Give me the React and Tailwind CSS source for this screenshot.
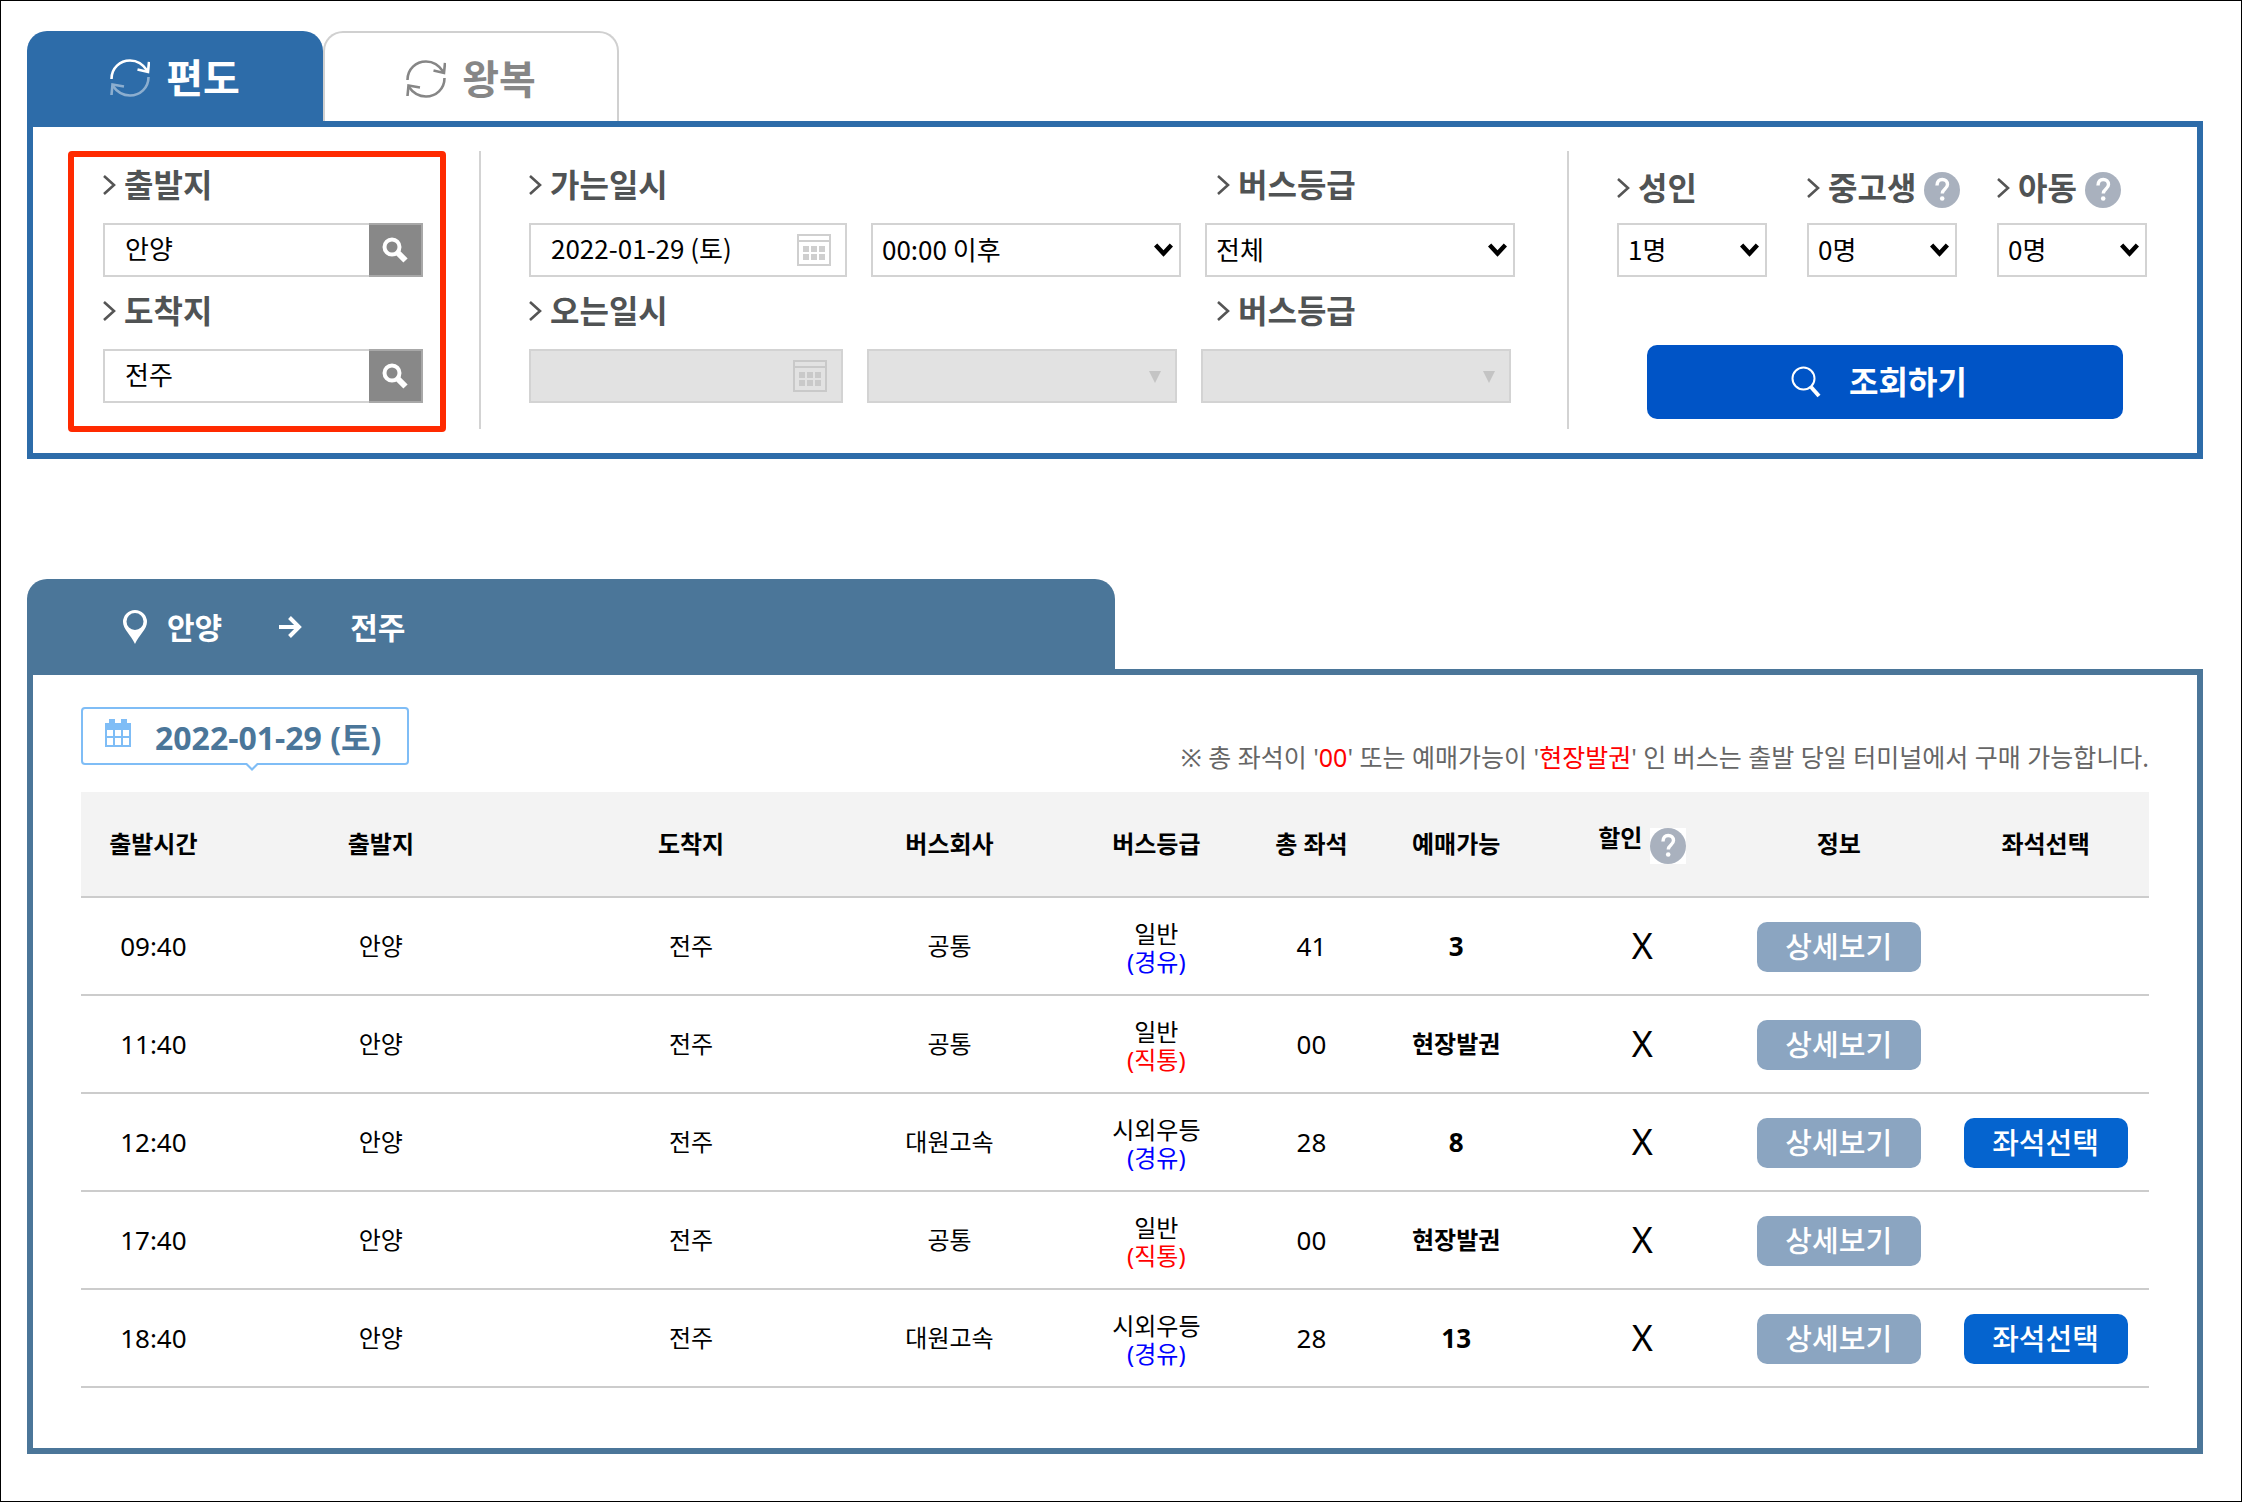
import { useState } from 'react'

const BUSES = [
  { time: '09:40', company: '공통', grade: '일반', route: '(경유)', seats: '41', left: '3', bookable: false },
  { time: '11:40', company: '공통', grade: '일반', route: '(직통)', seats: '00', left: '현장발권', bookable: false },
  { time: '12:40', company: '대원고속', grade: '시외우등', route: '(경유)', seats: '28', left: '8', bookable: true },
  { time: '17:40', company: '공통', grade: '일반', route: '(직통)', seats: '00', left: '현장발권', bookable: false },
  { time: '18:40', company: '대원고속', grade: '시외우등', route: '(경유)', seats: '28', left: '13', bookable: true },
]

function RoundTripIcon({ fadeReturn }) {
  return (
    <svg className="w-10 h-10 shrink-0" viewBox="0 0 40 40" fill="none" stroke="currentColor" strokeWidth="2.6">
      <path d="M1.5 21C1.5 10 10 2.5 20 2.5c7 0 13 3.500 17.500 10.500" />
      <path d="M27.500 11.500 38 14l1-10" />
      <g opacity={fadeReturn ? 0.45 : 1}>
        <path d="M38.500 19C38.500 30 30 37.500 20 37.500 13 37.500 7 34 2.500 27.500" />
        <path d="M14 28.500 2.500 26.500 1.500 37" />
      </g>
    </svg>
  )
}

function HelpIcon() {
  return (
    <svg className="w-9 h-9 shrink-0" viewBox="0 0 36 36" fill="none">
      <circle cx="18" cy="18" r="18" fill="#a9b1be" />
      <path d="M13 13.500c0-4 2.200-6 5.200-6s5.300 1.900 5.300 5.100c0 4.400-5.200 4.400-5.200 8.900" stroke="#fff" strokeWidth="3.400" />
      <circle cx="18.200" cy="26.500" r="2.300" fill="#fff" />
    </svg>
  )
}

function CalendarIcon({ color }) {
  return (
    <svg className="w-[34px] h-8 shrink-0" viewBox="0 0 34 32" fill="none" stroke={color} strokeWidth="2">
      <path d="M1 1h32v30H1zM1 7h32" />
      <g fill={color} stroke="none">
        <path d="M6 12h6v6H6zM14 12h6v6h-6zM22 12h6v6h-6zM6 20h6v6H6zM14 20h6v6h-6zM22 20h6v6h-6z" />
      </g>
    </svg>
  )
}

function FieldLabel({ htmlFor, children }) {
  return (
    <label htmlFor={htmlFor} className="flex items-center gap-2 h-11 mb-1 text-[32px] leading-[44px] font-bold text-[#505354] whitespace-nowrap">
      <svg className="w-[13px] h-5 shrink-0" viewBox="0 0 13 20" fill="none" stroke="#555" strokeWidth="2.6">
        <path d="M1 1l10 9L1 19" />
      </svg>
      {children}
    </label>
  )
}

function PlaceField({ id, label, value, onChange }) {
  return (
    <>
      <FieldLabel htmlFor={id}>{label}</FieldLabel>
      <div className="flex h-[54px] border-2 border-[#d3d3d3]">
        <input
          id={id}
          type="text"
          value={value}
          onChange={(e) => onChange(e.target.value)}
          className="flex-1 min-w-0 pl-5 pb-1.5 text-[26px] font-['Noto_Sans_CJK_KR',sans-serif] outline-none"
        />
        <button className="flex items-center justify-center w-[54px] -my-0.5 -mr-0.5 border-2 border-l-0 border-[#a8a8a8] bg-[#888]" title={`${label} 검색`}>
          <svg className="w-[26px] h-[26px]" viewBox="0 0 26 26" fill="none" stroke="#fff">
            <circle cx="10" cy="10" r="7.500" strokeWidth="4" />
            <path d="M15 15l8.500 8.500" strokeWidth="6" />
          </svg>
        </button>
      </div>
    </>
  )
}

function Dropdown({ id, options }) {
  return (
    <div className="relative min-w-0">
      <select id={id} className="appearance-none block w-full h-[54px] pl-[9px] pr-9 pb-1 border-2 border-[#d3d3d3] bg-white text-[26px] font-['Noto_Sans_CJK_KR',sans-serif] text-black">
        {options.map((o) => <option key={o}>{o}</option>)}
      </select>
      <svg className="absolute right-2 top-5 w-[19px] h-[14px] pointer-events-none" viewBox="0 0 19 14" fill="none" stroke="#000" strokeWidth="4.500">
        <path d="M1.600 2l7.900 8.500L17.400 2" />
      </svg>
    </div>
  )
}

function DisabledDropdown({ id }) {
  return (
    <div className="relative min-w-0">
      <select id={id} disabled className="appearance-none block w-full h-[54px] border-2 border-[#d3d3d3] bg-[#e2e2e2] opacity-100" />
      <svg className="absolute right-4 top-[22px] w-3 h-3 pointer-events-none" viewBox="0 0 12 12">
        <path d="M0 0h12L6 12z" fill="#c4c4c4" />
      </svg>
    </div>
  )
}

function PassengerField({ id, label, options, help }) {
  return (
    <div className="flex flex-col gap-3 w-[150px]">
      <div className="flex items-center gap-2 h-12 pt-1.5">
        <FieldLabel htmlFor={id}>{label}</FieldLabel>
        {help && <HelpIcon />}
      </div>
      <Dropdown id={id} options={options} />
    </div>
  )
}

function SearchPanel() {
  const [trip, setTrip] = useState('oneway')
  const [from, setFrom] = useState('안양')
  const [to, setTo] = useState('전주')
  const [date, setDate] = useState('2022-01-29 (토)')

  const active = 'bg-[#2d6ca9] text-white'
  const idle = 'bg-white text-[#868686] border-2 border-b-0 border-[#d0d0d0]'

  return (
    <section>
      {/* Trip type tabs */}
      <div role="tablist" className="flex">
        <button
          role="tab"
          aria-selected={trip === 'oneway'}
          onClick={() => setTrip('oneway')}
          className={`flex items-center justify-center gap-4 w-[296px] h-[90px] pt-1 rounded-t-[20px] text-[40px] leading-[48px] font-bold ${trip === 'oneway' ? active : idle}`}
        >
          <RoundTripIcon fadeReturn={trip === 'oneway'} />
          편도
        </button>
        <button
          role="tab"
          aria-selected={trip === 'round'}
          onClick={() => setTrip('round')}
          className={`flex items-center justify-center gap-4 w-[296px] h-[90px] pt-1 rounded-t-[20px] text-[40px] leading-[48px] font-bold ${trip === 'round' ? active : idle}`}
        >
          <RoundTripIcon fadeReturn={trip === 'round'} />
          왕복
        </button>
      </div>

      <div className="flex items-start pt-6 pb-[21px] pl-[35px] pr-[50px] border-6 border-[#2d6ca9]">
        {/* Terminals */}
        <div className="flex flex-col gap-3 shrink-0 w-[378px] h-[281px] pt-1.5 pl-[29px] pr-[17px] mr-[33px] border-6 border-[#ff2a00] rounded">
          <PlaceField id="from" label="출발지" value={from} onChange={setFrom} />
          <PlaceField id="to" label="도착지" value={to} onChange={setTo} />
        </div>

        {/* Dates and bus grade */}
        <div className="flex flex-col gap-3 flex-1 h-[278px] pt-3 pl-12 pr-[52px] border-x-2 border-[#d3d3d3]">
          <div className="grid grid-cols-[318fr_310fr_310fr] gap-x-6 gap-y-3">
            <FieldLabel htmlFor="go-date">가는일시</FieldLabel>
            <div className="col-start-3 pl-3">
              <FieldLabel htmlFor="go-grade">버스등급</FieldLabel>
            </div>
            <div className="flex items-center min-w-0 h-[54px] pr-3.5 border-2 border-[#d3d3d3]">
              <input
                id="go-date"
                type="text"
                value={date}
                onChange={(e) => setDate(e.target.value)}
                className="flex-1 min-w-0 pl-5 pb-1.5 text-[26px] font-['Noto_Sans_CJK_KR',sans-serif] outline-none"
              />
              <CalendarIcon color="#cfcfcf" />
            </div>
            <Dropdown id="go-time" options={['00:00 이후', '06:00 이후', '12:00 이후', '18:00 이후']} />
            <Dropdown id="go-grade" options={['전체', '일반', '시외우등']} />
          </div>
          <div className="grid grid-cols-[314fr_310fr_310fr] gap-x-6 gap-y-3 pr-1">
            <FieldLabel htmlFor="back-date">오는일시</FieldLabel>
            <div className="col-start-3 pl-4">
              <FieldLabel htmlFor="back-grade">버스등급</FieldLabel>
            </div>
            <div className="flex items-center min-w-0 h-[54px] pr-3.5 border-2 border-[#d3d3d3] bg-[#e2e2e2]">
              <input id="back-date" type="text" disabled className="flex-1 min-w-0" />
              <CalendarIcon color="#c9c9c9" />
            </div>
            <DisabledDropdown id="back-time" />
            <DisabledDropdown id="back-grade" />
          </div>
        </div>

        {/* Passengers */}
        <div className="shrink-0 pt-3 pl-12">
          <div className="flex gap-10">
            <PassengerField id="adult" label="성인" options={['1명', '0명', '2명']} />
            <PassengerField id="student" label="중고생" options={['0명', '1명', '2명']} help />
            <PassengerField id="child" label="아동" options={['0명', '1명', '2명']} help />
          </div>
          <div className="pt-[68px] pl-[30px] pr-6">
            <button className="flex items-center justify-center gap-7 w-full h-[74px] pr-3 rounded-[10px] bg-[#0054c6] text-white text-[32px] font-bold">
              <svg className="w-[30px] h-8" viewBox="0 0 30 32" fill="none" stroke="currentColor">
                <circle cx="12.500" cy="12.500" r="11" strokeWidth="2" />
                <path d="M20 21l8 9" strokeWidth="4" />
              </svg>
              조회하기
            </button>
          </div>
        </div>
      </div>
    </section>
  )
}

function Timetable() {
  return (
    <section className="mt-[120px]">
      <h2 className="flex items-center w-1/2 h-[90px] pl-24 pt-1.5 rounded-t-[20px] bg-[#4b7699] text-white text-[30px] font-bold">
        <svg className="w-6 h-[34px] mr-5" viewBox="0 0 24 34">
          <path fillRule="evenodd" d="M12 0a12 12 0 0 1 12 12c0 7-8 13-12 22C8 25 0 19 0 12A12 12 0 0 1 12 0zm0 3a8.500 8.500 0 1 0 0 17 8.500 8.500 0 0 0 0-17z" fill="#fff" />
        </svg>
        안양
        <svg className="w-6 h-[22px] ml-14 mr-12" viewBox="0 0 24 22" fill="none" stroke="#fff" strokeWidth="4">
          <path d="M1 11h20M11.500 1.500 21 11l-9.500 9.500" />
        </svg>
        전주
      </h2>

      <div className="px-12 pt-8 pb-[60px] border-6 border-[#4b7699]">
        <div className="flex items-end justify-between pb-[21px]">
          {/* Date bubble, the notch hangs over its bottom border */}
          <div className="relative flex items-center w-[328px] h-[58px] mb-1.5 pl-[22px] border-2 border-[#7fbdf6] rounded">
            <svg className="w-[26px] h-7 mb-1.5 mr-6" viewBox="0 0 26 28" fill="#7fbdf6">
              <path fillRule="evenodd" d="M0 4h4V0h6v4h6V0h6v4h4v24H0zM2 11v6h6v-6zM10 11v6h6v-6zM18 11v6h6v-6zM2 19v7h6v-7zM10 19v7h6v-7zM18 19v7h6v-7z" />
            </svg>
            <span className="pt-1 text-[32px] leading-10 font-bold text-[#4b7699]">2022-01-29 (토)</span>
            <svg className="absolute left-[161px] -bottom-2 w-4 h-2" viewBox="0 0 16 8">
              <path d="M0 0h16L8 8z" fill="#7fbdf6" />
              <path d="M3 0h10L8 5z" fill="#fff" />
            </svg>
          </div>
          <p className="text-[25px] leading-7 text-[#666]">
            ※ 총 좌석이 '<span className="text-[#f00]">00</span>' 또는 예매가능이 '<span className="text-[#f00]">현장발권</span>' 인 버스는 출발 당일 터미널에서 구매 가능합니다.
          </p>
        </div>

        <table className="w-full table-fixed border-collapse text-center text-[24px] leading-7">
          <thead>
            <tr className="h-[105px] bg-[#f3f3f3] border-b-2 border-[#ccc]">
              <th className="w-[7%]">출발시간</th>
              <th className="w-[15%]">출발지</th>
              <th className="w-[15%]">도착지</th>
              <th className="w-[10%]">버스회사</th>
              <th className="w-[10%]">버스등급</th>
              <th className="w-[5%]">총 좌석</th>
              <th className="w-[9%]">예매가능</th>
              <th className="w-[9%]">
                <span className="flex items-start justify-center gap-2">
                  할인
                  <span className="mt-1 bg-white"><HelpIcon /></span>
                </span>
              </th>
              <th className="w-[10%]">정보</th>
              <th className="w-[10%]">좌석선택</th>
            </tr>
          </thead>
          <tbody>
            {BUSES.map((bus) => (
              <tr key={bus.time} className="h-[98px] border-b-2 border-[#ccc]">
                <td className="text-[26px]">{bus.time}</td>
                <td>안양</td>
                <td>전주</td>
                <td>{bus.company}</td>
                <td className="pt-1">
                  <div>{bus.grade}</div>
                  <div className={bus.route === '(경유)' ? 'text-[#00f]' : 'text-[#f00]'}>{bus.route}</div>
                </td>
                <td className="text-[26px]">{bus.seats}</td>
                <td className={bus.left === '현장발권' ? 'font-bold' : 'font-bold text-[26px]'}>{bus.left}</td>
                <td className="text-[36px]">X</td>
                <td className="pt-0.5">
                  <button className="w-[164px] h-[50px] rounded-[10px] bg-[#8ba5c1] text-white text-[29px] font-medium">상세보기</button>
                </td>
                <td className="pt-0.5">
                  {bus.bookable && (
                    <button className="w-[164px] h-[50px] rounded-[10px] bg-[#0564cf] text-white text-[29px] font-medium">좌석선택</button>
                  )}
                </td>
              </tr>
            ))}
          </tbody>
        </table>
      </div>
    </section>
  )
}

export default function App() {
  return (
    <main className="min-h-screen pt-[30px] pl-[26px] pr-[38px] pb-[45px] border border-black bg-white text-black font-['Noto_Sans','Noto_Sans_CJK_KR',sans-serif]">
      <SearchPanel />
      <Timetable />
    </main>
  )
}
